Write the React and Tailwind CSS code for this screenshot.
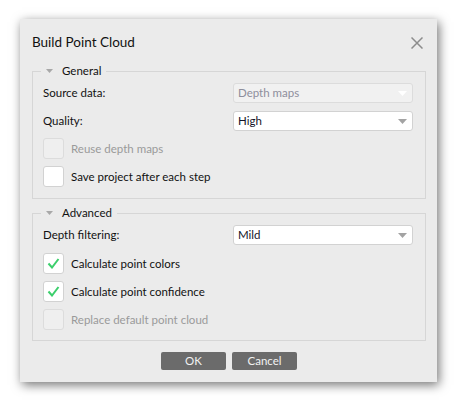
import { useState } from "react";

const Arrow = ({ color = "#a3a3a3" }) => (
  <svg width="9" height="5" viewBox="0 0 9 5">
    <polygon points="0,0 9,0 4.5,5" fill={color} />
  </svg>
);

const Combo = ({ value, disabled }) => (
  <div
    className={`h-[20px] w-[180px] rounded-[3px] border flex items-center justify-between pl-[4px] pr-[5px] text-[11.5px] leading-none ${
      disabled
        ? "bg-[#f1f1f1] border-[#dcdcdc] text-[#8e8e9c]"
        : "bg-white border-[#d2d2d2] text-[#141428]"
    }`}
  >
    <span>{value}</span>
    <Arrow color={disabled ? "#ffffff" : "#a3a3a3"} />
  </div>
);

const Check = ({ label, checked, disabled }) => (
  <div className="flex items-center gap-[7px] h-[21px]">
    <div
      className={`w-[21px] h-[21px] rounded-[3px] border flex items-center justify-center ${
        disabled ? "bg-[#efefef] border-[#dcdcdc]" : "bg-white border-[#d2d2d2]"
      }`}
    >
      {checked && (
        <svg width="13" height="11" viewBox="0 0 13 11">
          <polyline
            points="1.5,5.5 5,9.5 11.5,1"
            fill="none"
            stroke="#3ccf6c"
            strokeWidth="2"
          />
        </svg>
      )}
    </div>
    <span className={`text-[11.5px] leading-none ${disabled ? "text-[#9a9a9a]" : "text-[#111]"}`}>
      {label}
    </span>
  </div>
);

const Group = ({ title, children, pb }) => (
  <fieldset className={`mx-[12px] w-[394px] border border-[#d6d6d6] pl-[10px] pr-[11px] pt-[4px] ${pb}`}>
    <legend className="ml-[-2px] px-[5px] h-[16px]">
      <div className="flex items-center gap-[9px] h-[16px]">
        <svg width="7" height="4" viewBox="0 0 7 4">
          <polygon points="0,0 7,0 3.5,4" fill="#a8a8a8" />
        </svg>
        <span className="text-[11.5px] leading-none text-[#111]">{title}</span>
      </div>
    </legend>
    {children}
  </fieldset>
);

const Row = ({ label, children }) => (
  <div className="grid grid-cols-[190px_180px] items-center">
    <span className="text-[11.5px] leading-none text-[#111]">{label}</span>
    {children}
  </div>
);

export default function App() {
  const [open] = useState(true);

  return (
    <div className="min-h-screen bg-white pt-[19px] pl-[20px] font-['Lato',sans-serif]">
      <div className="w-[417px] h-[363px] bg-[#ebebeb] shadow-[2px_3px_10px_rgba(0,0,0,0.55)] flex flex-col">
        {/* Title bar */}
        <div className="h-[44px] pt-[4px] pl-[12px] pr-[14px] flex items-center justify-between">
          <span className="text-[13.5px] leading-none text-[#111]">Build Point Cloud</span>
          <svg width="12" height="12" viewBox="0 0 12 12">
            <path d="M0.5 0.5 L11.5 11.5 M11.5 0.5 L0.5 11.5" stroke="#8c8c8c" strokeWidth="1.5" />
          </svg>
        </div>

        {open && (
          <Group title="General" pb="pb-[11px]">
            <div className="flex flex-col gap-[8px]">
              <Row label="Source data:">
                <Combo value="Depth maps" disabled />
              </Row>
              <Row label="Quality:">
                <Combo value="High" />
              </Row>
            </div>
            <div className="mt-[7px] flex flex-col gap-[7px]">
              <Check label="Reuse depth maps" disabled />
              <Check label="Save project after each step" />
            </div>
          </Group>
        )}

        <div className="mt-[6px]">
          <Group title="Advanced" pb="pb-[10px]">
            <Row label="Depth filtering:">
              <Combo value="Mild" />
            </Row>
            <div className="mt-[8px] flex flex-col gap-[7px]">
              <Check label="Calculate point colors" checked />
              <Check label="Calculate point confidence" checked />
              <Check label="Replace default point cloud" disabled />
            </div>
          </Group>
        </div>

        <div className="mt-[11px] flex justify-center gap-[6px] pl-[1px]">
          <button className="w-[65px] h-[18px] rounded-[2px] bg-[#6b6b6b] text-[#f2f2f2] text-[11.5px] leading-none">
            OK
          </button>
          <button className="w-[65px] h-[18px] rounded-[2px] bg-[#6b6b6b] text-[#f2f2f2] text-[11.5px] leading-none">
            Cancel
          </button>
        </div>
      </div>
    </div>
  );
}
